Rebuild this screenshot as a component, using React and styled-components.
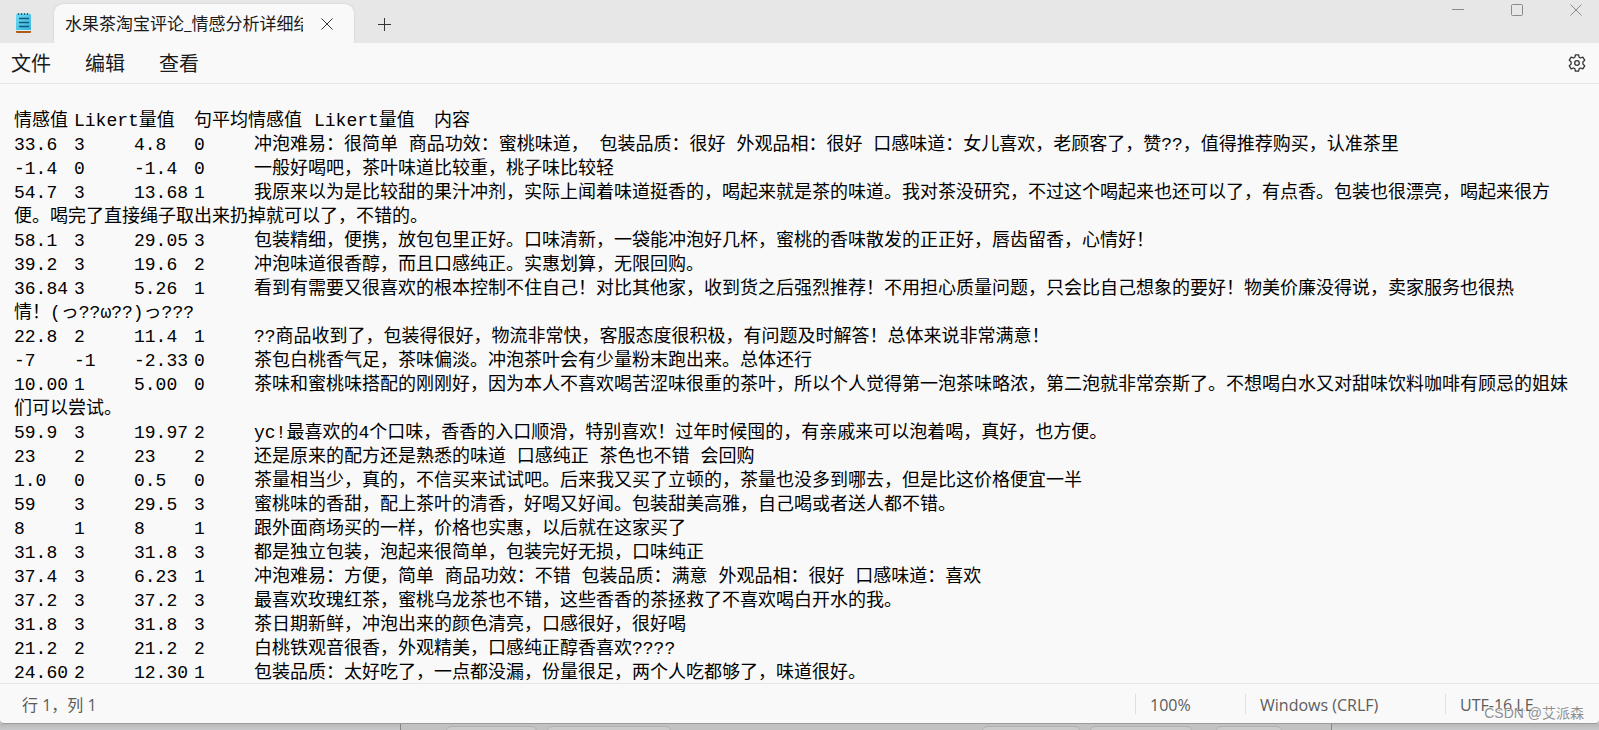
import React from 'react';

import styled, { createGlobalStyle } from 'styled-components';

// Data
// ==========================================================================

const text = `情感值	Likert量值	句平均情感值	Likert量值	内容
33.6	3	4.8	0	冲泡难易：很简单 商品功效：蜜桃味道， 包装品质：很好 外观品相：很好 口感味道：女儿喜欢，老顾客了，赞??，值得推荐购买，认准茶里
-1.4	0	-1.4	0	一般好喝吧，茶叶味道比较重，桃子味比较轻
54.7	3	13.68	1	我原来以为是比较甜的果汁冲剂，实际上闻着味道挺香的，喝起来就是茶的味道。我对茶没研究，不过这个喝起来也还可以了，有点香。包装也很漂亮，喝起来很方便。喝完了直接绳子取出来扔掉就可以了，不错的。
58.1	3	29.05	3	包装精细，便携，放包包里正好。口味清新，一袋能冲泡好几杯，蜜桃的香味散发的正正好，唇齿留香，心情好！
39.2	3	19.6	2	冲泡味道很香醇，而且口感纯正。实惠划算，无限回购。
36.84	3	5.26	1	看到有需要又很喜欢的根本控制不住自己！对比其他家，收到货之后强烈推荐！不用担心质量问题，只会比自己想象的要好！物美价廉没得说，卖家服务也很热
情！(っ??ω??)っ???
22.8	2	11.4	1	??商品收到了，包装得很好，物流非常快，客服态度很积极，有问题及时解答！总体来说非常满意！
-7	-1	-2.33	0	茶包白桃香气足，茶味偏淡。冲泡茶叶会有少量粉末跑出来。总体还行
10.00	1	5.00	0	茶味和蜜桃味搭配的刚刚好，因为本人不喜欢喝苦涩味很重的茶叶，所以个人觉得第一泡茶味略浓，第二泡就非常奈斯了。不想喝白水又对甜味饮料咖啡有顾忌的姐妹们可以尝试。
59.9	3	19.97	2	yc!最喜欢的4个口味，香香的入口顺滑，特别喜欢！过年时候囤的，有亲戚来可以泡着喝，真好，也方便。
23	2	23	2	还是原来的配方还是熟悉的味道 口感纯正 茶色也不错 会回购
1.0	0	0.5	0	茶量相当少，真的，不信买来试试吧。后来我又买了立顿的，茶量也没多到哪去，但是比这价格便宜一半
59	3	29.5	3	蜜桃味的香甜，配上茶叶的清香，好喝又好闻。包装甜美高雅，自己喝或者送人都不错。
8	1	8	1	跟外面商场买的一样，价格也实惠，以后就在这家买了
31.8	3	31.8	3	都是独立包装，泡起来很简单，包装完好无损，口味纯正
37.4	3	6.23	1	冲泡难易：方便，简单 商品功效：不错 包装品质：满意 外观品相：很好 口感味道：喜欢
37.2	3	37.2	3	最喜欢玫瑰红茶，蜜桃乌龙茶也不错，这些香香的茶拯救了不喜欢喝白开水的我。
31.8	3	31.8	3	茶日期新鲜，冲泡出来的颜色清亮，口感很好，很好喝
21.2	2	21.2	2	白桃铁观音很香，外观精美，口感纯正醇香喜欢????
24.60	2	12.30	1	包装品质：太好吃了，一点都没漏，份量很足，两个人吃都够了，味道很好。`;

const menus = ['文件', '编辑', '查看'];

// Layout
// ==========================================================================

const GlobalStyle = createGlobalStyle`
  * {
    box-sizing: border-box;
  }
  body {
    margin: 0;
    font-family: 'Open Sans', 'Noto Sans CJK SC', sans-serif;
    color: #1b1b1b;
    background: #c6c7c8;
    overflow: hidden;
  }
  button {
    font: inherit;
    color: inherit;
    border: 0;
    padding: 0;
    background: none;
  }
  svg {
    display: block;
  }
`;

const Desktop = styled.div`
  display: flex;
  flex-direction: column;
  height: 100vh;
`;

const Window = styled.div`
  flex: 1;
  min-height: 0;
  display: flex;
  flex-direction: column;
  background: #f9f9f9;
  border-bottom: 1px solid #9a9c9c;
  border-radius: 0 0 4px 4px;
`;

// Title bar
// ==========================================================================

const TitleBar = styled.header`
  display: flex;
  align-items: flex-end;
  height: 43px;
  flex: none;
  background: #e7e7e7;
`;

const AppIcon = styled.div`
  align-self: flex-start;
  width: 54px;
  padding: 12px 0 0 15px;
`;

const Tab = styled.div`
  display: flex;
  align-items: center;
  width: 300px;
  height: 39px;
  padding-left: 11px;
  background: #f9f9f9;
  border-radius: 9px 9px 0 0;
  box-shadow: 0 0 2px #c4c4c4;
  clip-path: inset(-3px -3px 0 -3px);
`;

const TabTitle = styled.div`
  flex: none;
  width: 238px;
  overflow: hidden;
  white-space: nowrap;
  font-size: 17px;
  line-height: 24px;
`;

const IconButton = styled.button`
  display: flex;
  align-items: center;
  justify-content: center;
  flex: none;
  width: ${props => props.$width || 32}px;
  height: ${props => props.$height || 32}px;
  color: ${props => props.$color || '#333'};
`;

const NewTab = styled(IconButton)`
  margin-left: 14px;
  height: 38px;
`;

const WindowControls = styled.div`
  display: flex;
  align-self: flex-start;
  margin-left: auto;
  gap: 13px;
`;

// Menu
// ==========================================================================

const MenuBar = styled.nav`
  display: flex;
  align-items: center;
  flex: none;
  height: 41px;
  padding: 0 6px 0 11px;
  border-bottom: 1px solid #e5e5e5;
`;

const MenuItem = styled.button`
  width: 74px;
  padding-top: 2px;
  text-align: left;
  && {
    font-size: 20px;
  }
  line-height: 28px;
`;

const Settings = styled(IconButton)`
  margin-left: auto;
`;

// Editor
// ==========================================================================

const Editor = styled.textarea`
  flex: 1;
  min-height: 0;
  width: 100%;
  margin: 0;
  padding: 25px 20px 0 14px;
  border: 0;
  outline: none;
  resize: none;
  overflow: hidden;
  background: transparent;
  color: #000;
  font-family: 'Liberation Mono', 'Noto Sans CJK SC', monospace;
  font-size: 18px;
  line-height: 24px;
  tab-size: 60px;
  white-space: pre-wrap;
`;

// Status bar
// ==========================================================================

const StatusBar = styled.footer`
  display: flex;
  align-items: center;
  flex: none;
  height: 40px;
  border-top: 1px solid #e5e5e5;
  color: #5c5c5c;
  font-size: 16px;
`;

const Position = styled.div`
  flex: 1;
  padding-left: 22px;
`;

const StatusCell = styled.div`
  width: ${props => props.$width}px;
  height: 20px;
  padding-left: 14px;
  line-height: 22px;
  white-space: nowrap;
  border-left: 1px solid #e0e0e0;
`;

const Watermark = styled.div`
  position: absolute;
  right: 15px;
  bottom: 6px;
  color: #8f8f8f;
  font-family: 'Liberation Sans', 'Noto Sans CJK SC', sans-serif;
  font-size: 14px;
  line-height: 22px;
  text-shadow: 1px 1px 0 #fff;
`;

// Windows behind
// ==========================================================================

const Behind = styled.div`
  display: flex;
  flex: none;
  height: 6px;
  overflow: hidden;
  background: linear-gradient(#b8b8b8, #c9cacb);
`;

const BehindPanel = styled.div`
  display: flex;
  width: 932px;
  margin-left: 400px;
  padding: 2px 49px 0 45px;
  gap: 10px;
  border: solid #858585;
  border-width: 0 1px;
  background: #c2c2c2;
`;

const BehindTab = styled.div`
  width: ${props => props.$width}px;
  height: 12px;
  margin-left: ${props => props.$left || 0};
  border: 1px solid #b0b0b0;
  border-radius: 5px;
  background: #cbcbcb;
`;

// Icons
// ==========================================================================

const NotepadIcon = () => (
  <svg width="17" height="22" viewBox="0 0 17 22">
    <defs>
      <linearGradient id="page" x1="0" y1="0" x2="1" y2="1">
        <stop offset="0" stopColor="#6fdaf5" />
        <stop offset="1" stopColor="#35b1d6" />
      </linearGradient>
    </defs>
    <rect x="1" y="17" width="15" height="4" rx="1" fill="#b35a12" />
    <rect x="1" y="2" width="15" height="17" rx="1" fill="url(#page)" />
    <path d="M3.5 1v2M6.5 1v2M9.5 1v2M12.5 1v2" stroke="#146b8c" strokeWidth="1.4" />
    <path d="M4 6.5h10M4 10.5h10M4 14.5h10" stroke="#0f5d7d" strokeWidth="1.6" />
    <path d="M1 18.5h15" stroke="#d9eef5" strokeWidth="1" />
  </svg>
);

const CrossIcon = () => (
  <svg width="12" height="12" viewBox="0 0 12 12" fill="none" stroke="currentColor">
    <path d="M.5.5l11 11M11.5.5l-11 11" />
  </svg>
);

const PlusIcon = () => (
  <svg width="13" height="13" viewBox="0 0 13 13" fill="none" stroke="currentColor">
    <path d="M6.5 0v13M0 6.5h13" />
  </svg>
);

const MinimizeIcon = () => (
  <svg width="12" height="12" viewBox="0 0 12 12" fill="none" stroke="currentColor">
    <path d="M0 5.5h12" />
  </svg>
);

const MaximizeIcon = () => (
  <svg width="12" height="12" viewBox="0 0 12 12" fill="none" stroke="currentColor">
    <rect x=".5" y=".5" width="11" height="11" rx="1" />
  </svg>
);

const GearIcon = () => (
  <svg width="18" height="18" viewBox="0 0 18 18" fill="none" stroke="currentColor" strokeWidth="1.3" strokeLinejoin="round">
    <path d="M7.4.8h3.2l.5 2.4 1.3.8 2.4-.8 1.9 3-1.8 1.7v2.2l1.8 1.7-1.9 3-2.4-.8-1.3.8-.5 2.4H7.4l-.5-2.4-1.3-.8-2.4.8-1.9-3 1.8-1.7V7.9L1.3 6.200l1.900-3 2.400.8 1.300-.8z" />
    <circle cx="9" cy="9" r="2.3" />
  </svg>
);

// App
// ==========================================================================

export default function App() {
  return (
    <Desktop>
      <GlobalStyle />
      <Window>
        <TitleBar>
          <AppIcon>
            <NotepadIcon />
          </AppIcon>
          <Tab>
            <TabTitle>水果茶淘宝评论_情感分析详细结果</TabTitle>
            <IconButton aria-label="关闭标签页" $width={48}>
              <CrossIcon />
            </IconButton>
          </Tab>
          <NewTab aria-label="新建标签页">
            <PlusIcon />
          </NewTab>
          <WindowControls>
            <IconButton aria-label="最小化" $width={46} $height={20} $color="#8a8a8a">
              <MinimizeIcon />
            </IconButton>
            <IconButton aria-label="最大化" $width={46} $height={20} $color="#8a8a8a">
              <MaximizeIcon />
            </IconButton>
            <IconButton aria-label="关闭" $width={46} $height={20} $color="#8a8a8a">
              <CrossIcon />
            </IconButton>
          </WindowControls>
        </TitleBar>
        <MenuBar>
          {menus.map(menu => (
            <MenuItem key={menu}>{menu}</MenuItem>
          ))}
          <Settings aria-label="设置">
            <GearIcon />
          </Settings>
        </MenuBar>
        <Editor aria-label="文本编辑器" defaultValue={text} spellCheck={false} />
        <StatusBar>
          <Position>行 1，列 1</Position>
          <StatusCell $width={110}>100%</StatusCell>
          <StatusCell $width={200}>Windows (CRLF)</StatusCell>
          <StatusCell $width={154}>UTF-16 LE</StatusCell>
        </StatusBar>
      </Window>
      <Behind>
        <BehindPanel>
          <BehindTab $width={91} />
          <BehindTab $width={124} />
          <BehindTab $width={98} $left="auto" />
          <BehindTab $width={102} />
          <BehindTab $width={66} $left="14px" />
        </BehindPanel>
      </Behind>
      <Watermark>CSDN @艾派森</Watermark>
    </Desktop>
  );
}
